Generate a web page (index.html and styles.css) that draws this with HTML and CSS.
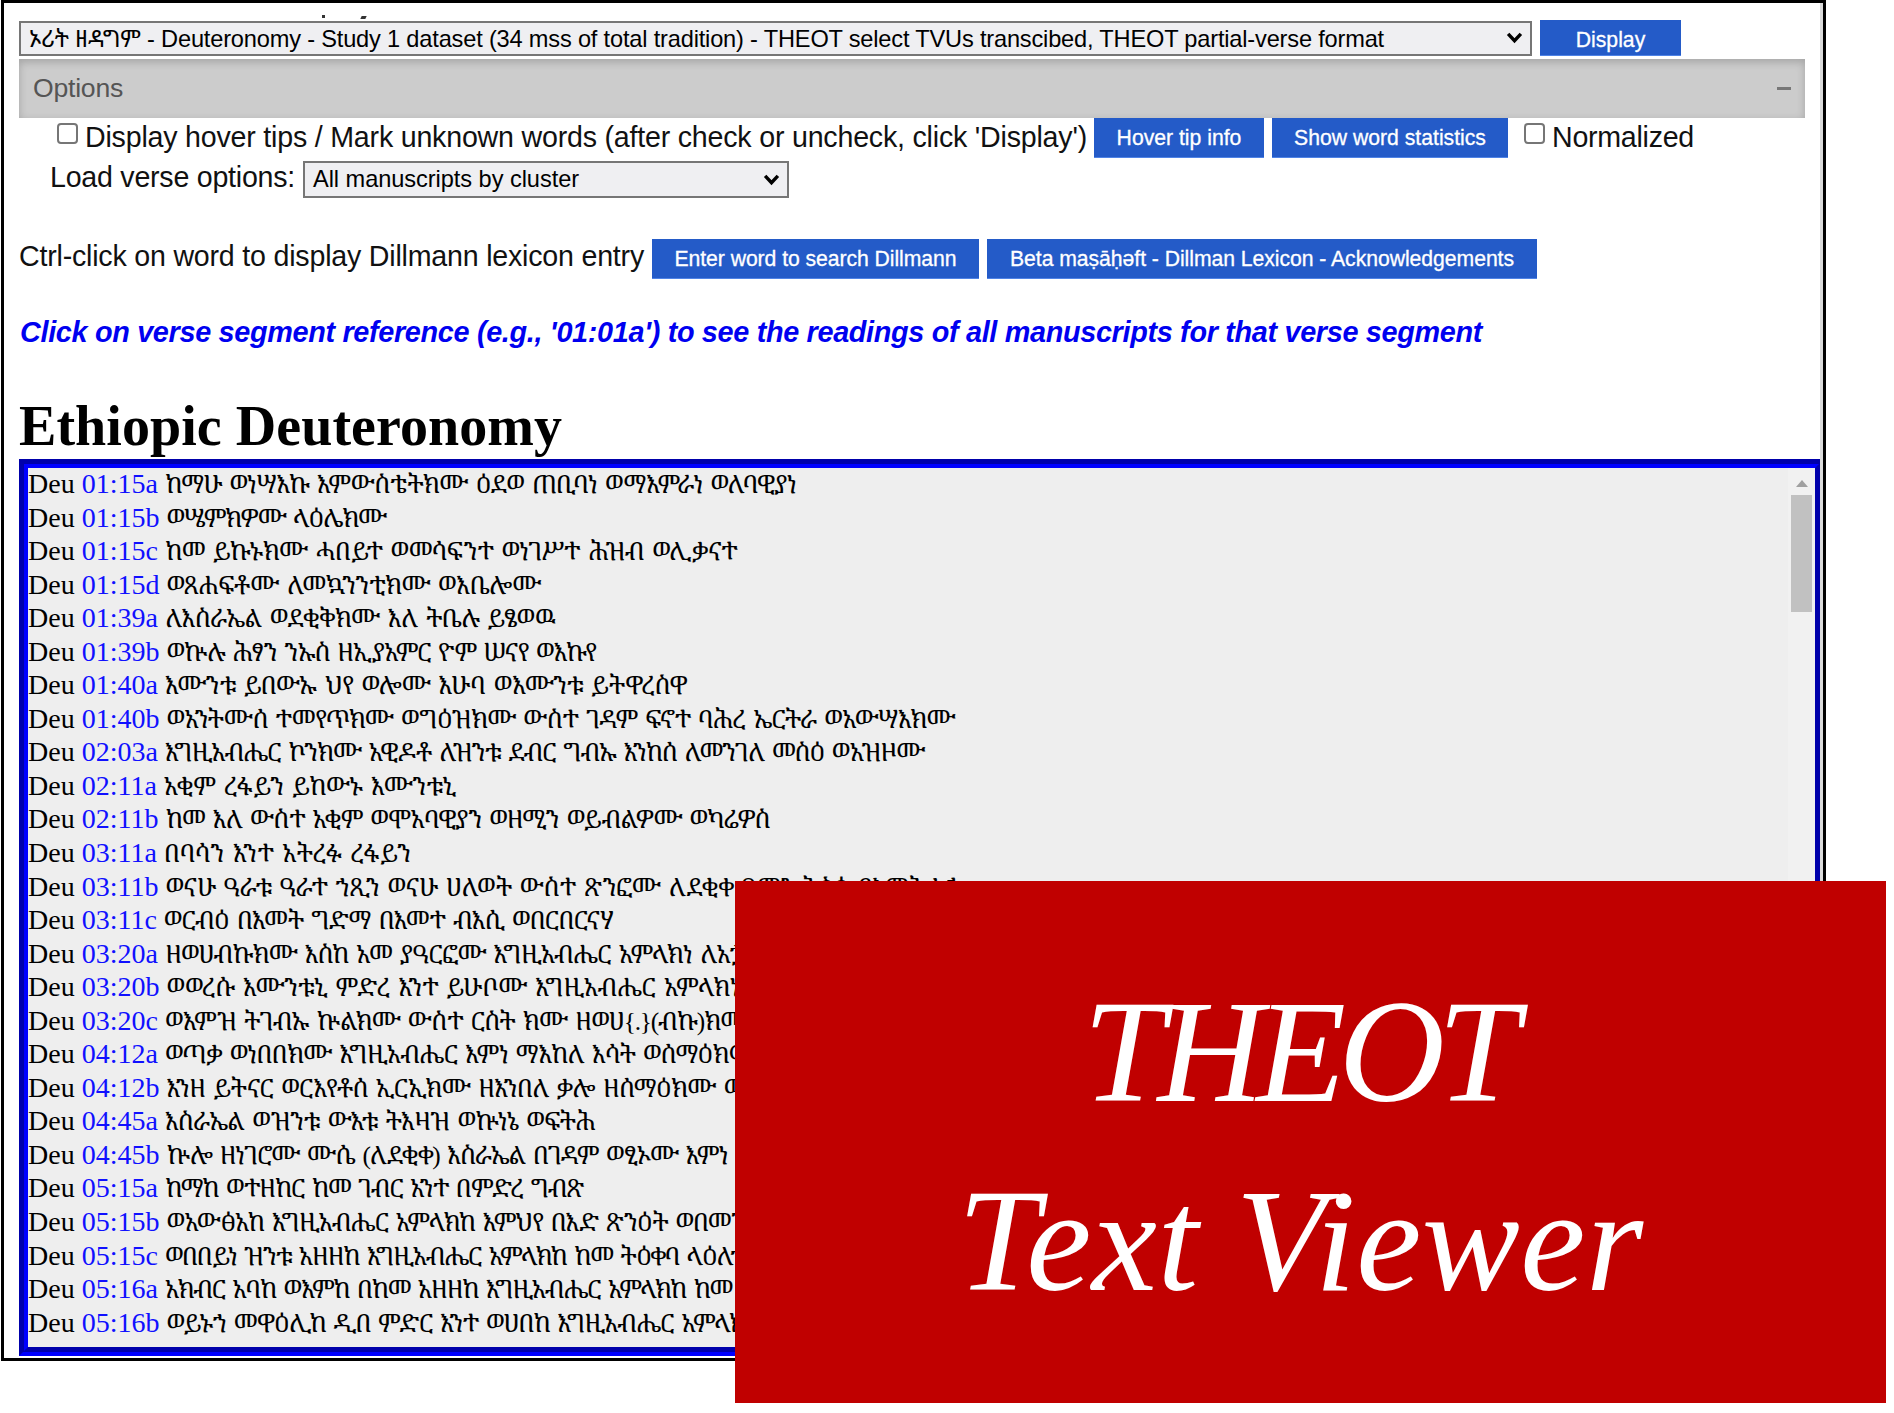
FILE: index.html
```html
<!DOCTYPE html>
<html lang="en">
<head>
<meta charset="utf-8">
<title>THEOT Text Viewer</title>
<link rel="stylesheet" href="styles.css">
</head>
<body>
<div class="frame">
<main class="page">
  <div class="toolbar">
    <i class="tip tip-dot"></i><i class="tip tip-stem"></i>
    <div class="select select-text"><span data-width="1355">ኦሪት ዘዳግም - Deuteronomy - Study 1 dataset (34 mss of total tradition) - THEOT select TVUs transcibed, THEOT partial-verse format</span><svg class="chevron" viewBox="0 0 16 12"><path d="M2 2.5l6 6.5 6-6.5"/></svg></div>
    <button class="btn btn-display">Display</button>
  </div>
  <div class="options"><span data-width="90">Options</span><i class="minus"></i></div>
  <div class="row row-tips">
    <input type="checkbox" class="check"><span class="label" data-width="1002">Display hover tips / Mark unknown words (after check or uncheck, click 'Display')</span>
    <button class="btn btn-hover">Hover tip info</button>
    <button class="btn btn-stats">Show word statistics</button>
    <input type="checkbox" class="check check-norm"><span class="label" data-width="142">Normalized</span>
  </div>
  <div class="row row-load">
    <span class="label" data-width="245">Load verse options:</span>
    <div class="select select-load"><span data-width="266">All manuscripts by cluster</span><svg class="chevron" viewBox="0 0 16 12"><path d="M2 2.5l6 6.5 6-6.5"/></svg></div>
  </div>
  <div class="row row-lex">
    <span class="label" data-width="625">Ctrl-click on word to display Dillmann lexicon entry</span>
    <button class="btn btn-search"><span data-width="282">Enter word to search Dillmann</span></button>
    <button class="btn btn-beta"><span data-width="504">Beta maṣāḥəft - Dillman Lexicon - Acknowledgements</span></button>
  </div>
  <p class="hint"><span data-width="1462">Click on verse segment reference (e.g., '01:01a') to see the readings of all manuscripts for that verse segment</span></p>
  <h1><span data-width="543">Ethiopic Deuteronomy</span></h1>
  <div class="viewer">
    <div class="verses">
      <p>Deu <a>01:15a</a> <b><span data-width="631">ከማሁ ወነሣእኩ እምውስቴትክሙ ዕደወ ጠቢባነ ወማእምራነ ወለባዊያነ</span></b></p>
      <p>Deu <a>01:15b</a> <b><span data-width="219">ወሤምክዎሙ ላዕሌክሙ</span></b></p>
      <p>Deu <a>01:15c</a> <b><span data-width="572">ከመ ይኩኑክሙ ሓበይተ ወመሳፍንተ ወነገሥተ ሕዝብ ወሊቃናተ</span></b></p>
      <p>Deu <a>01:15d</a> <b><span data-width="374">ወጸሐፍቶሙ ለመኳንንቲክሙ ወእቤሎሙ</span></b></p>
      <p>Deu <a>01:39a</a> <b><span data-width="390">ለእስራኤል ወደቂቅክሙ እለ ትቤሉ ይፄወዉ</span></b></p>
      <p>Deu <a>01:39b</a> <b><span data-width="429">ወኵሉ ሕፃን ንኡስ ዘኢያአምር ዮም ሠናየ ወእኩየ</span></b></p>
      <p>Deu <a>01:40a</a> <b><span data-width="522">እሙንቱ ይበውኡ ህየ ወሎሙ እሁባ ወእሙንቱ ይትዋረስዋ</span></b></p>
      <p>Deu <a>01:40b</a> <b><span data-width="788">ወአንትሙሰ ተመየጥክሙ ወግዕዝክሙ ውስተ ገዳም ፍኖተ ባሕረ ኤርትራ ወአውሣእክሙ</span></b></p>
      <p>Deu <a>02:03a</a> <b><span data-width="759">እግዚአብሔር ኮንክሙ አዊዶቶ ለዝንቱ ደብር ግብኡ እንከሰ ለመንገለ መስዕ ወአዝዞሙ</span></b></p>
      <p>Deu <a>02:11a</a> <b><span data-width="292">አቂም ረፋይን ይከውኑ እሙንቱኒ</span></b></p>
      <p>Deu <a>02:11b</a> <b><span data-width="604">ከመ እለ ውስተ አቂም ወሞአባዊያን ወዘሚን ወይብልዎሙ ወካሬዎስ</span></b></p>
      <p>Deu <a>03:11a</a> <b><span data-width="247">በባሳን እንተ አትረፉ ረፋይን</span></b></p>
      <p>Deu <a>03:11b</a> <b><span data-width="568">ወናሁ ዓራቱ ዓራተ ኀጺን ወናሁ ሀለወት ውስተ ጽንፎሙ ለደቂቀ</span> ዓሞን ትስዕ በእመት ኑኁ</b></p>
      <p>Deu <a>03:11c</a> <b><span data-width="449">ወርብዕ በእመት ግድማ በእመተ ብእሲ ወበርበርናሃ</span></b></p>
      <p>Deu <a>03:20a</a> <b><span data-width="527">ዘወሀብኩክሙ እስከ አመ ያዓርፎሙ እግዚአብሔር አምላክነ</span> ለአኃዊክሙ</b></p>
      <p>Deu <a>03:20b</a> <b><span data-width="489">ወወረሱ እሙንቱኒ ምድረ እንተ ይሁቦሙ እግዚአብሔር</span> አምላክነ</b></p>
      <p>Deu <a>03:20c</a> <b><span data-width="539">ወእምዝ ትገብኡ ኵልክሙ ውስተ ርስት ክሙ ዘወሀ{.}(ብኩ)</span>ክሙ</b></p>
      <p>Deu <a>04:12a</a> <b><span data-width="470">ወጣቃ ወነበበክሙ እግዚአብሔር እምነ ማእከለ እሳት</span> ወሰማዕክሙ</b></p>
      <p>Deu <a>04:12b</a> <b><span data-width="549">እንዘ ይትናር ወርእየቶሰ ኢርኢክሙ ዘእንበለ ቃሎ ዘሰማዕክሙ</span> ወአይድዐክሙ</b></p>
      <p>Deu <a>04:45a</a> <b><span data-width="430">እስራኤል ወዝንቱ ውእቱ ትእዛዝ ወኵነኔ ወፍትሕ</span></b></p>
      <p>Deu <a>04:45b</a> <b><span data-width="561">ኵሎ ዘነገሮሙ ሙሴ (ለደቂቀ) እስራኤል በገዳም ወፂኦሙ እምነ</span></b></p>
      <p>Deu <a>05:15a</a> <b><span data-width="418">ከማከ ወተዘከር ከመ ገብር አንተ በምድረ ግብጽ</span></b></p>
      <p>Deu <a>05:15b</a> <b><span data-width="501">ወአውፅአከ እግዚአብሔር አምላክከ እምህየ በእድ ጽንዕት</span> ወበመዝራዕት</b></p>
      <p>Deu <a>05:15c</a> <b><span data-width="514">ወበበይነ ዝንቱ አዘዘከ እግዚአብሔር አምላክከ ከመ ትዕቀባ</span> ላዕለተ</b></p>
      <p>Deu <a>05:16a</a> <b><span data-width="567">አክብር አባከ ወእምከ በከመ አዘዘከ እግዚአብሔር አምላክከ ከመ</span></b></p>
      <p>Deu <a>05:16b</a> <b><span data-width="507">ወይኑኀ መዋዕሊከ ዲበ ምድር እንተ ወሀበከ እግዚአብሔር</span> አምላክከ</b></p>
    </div>
    <div class="scrollbar"><i class="arrow"></i><i class="thumb"></i></div>
  </div>
</main>
</div>
<div class="banner"><div class="banner-top" data-width="429">THEOT</div><div data-width="686">Text Viewer</div></div>
<script src="fit.js"></script>
</body>
</html>
```
FILE: styles.css
```css
* { box-sizing: border-box; }
body { margin: 0; background: #fff; overflow: hidden; font-family: "Liberation Sans", "Noto Sans Ethiopic", "Abyssinica SIL", sans-serif; color: #111; position: relative; height: 1413px; }
.frame { margin-left: 1px; width: 1825px; height: 1361px; border: 3px solid #000; padding-left: 15px; display: flex; }
.page { width: 1804px; height: 1355px; overflow: hidden; border-right: 3px solid #dadada; flex: none; }
.toolbar { margin-top: 17px; height: 36px; display: flex; gap: 8px; position: relative; width: 1700px; }
.tip { position: absolute; background: #333; height: 3px; }
.tip-dot { left: 303px; top: -5px; width: 3px; }
.tip-stem { left: 342px; top: -4px; width: 5px; transform: skewX(-25deg); }
.select { display: flex; align-items: center; justify-content: space-between; background: #efeff2; border: 2px solid #767676; color: #000; font-size: 23.6px; white-space: nowrap; }
.select-text { width: 1513px; height: 35px; margin-top: 1px; padding: 0 7px 2px 8px; }
.select-load { width: 486px; height: 37px; padding: 0 7px 0 8px; margin-left: 8px; }
.chevron { width: 17px; height: 13px; fill: none; stroke: #000; stroke-width: 3.2; }
.btn { background: #245bc8; color: #fff; border: 0; padding: 0; font: 21.2px "Liberation Sans", sans-serif; white-space: nowrap; text-align: center; border-bottom: 1px solid #4f83e6; -webkit-text-stroke: .3px #fff; height: 40px; }
.btn-display { width: 141px; height: 36px; padding-top: 5px; }
.options { margin-top: 3px; width: 1786px; height: 59px; background: #ccc; box-shadow: inset 0 3px 8px rgba(0,0,0,.2); display: flex; align-items: center; justify-content: space-between; padding: 0 14px; color: #555; font-size: 26.6px; }
.minus { width: 14px; height: 3px; background: #777; }
.row { display: flex; white-space: nowrap; }
.label { font-size: 28.6px; line-height: 38px; flex: none; }
.row-tips { height: 40px; padding-left: 38px; }
.check { appearance: none; width: 21px; height: 21px; margin: 5px 7px 0 0; border: 2px solid #767676; border-radius: 4px; background: #fff; flex: none; }
.btn-hover { width: 170px; margin-left: 7px; }
.btn-stats { width: 236px; margin-left: 8px; }
.check-norm { margin-left: 16px; }
.row-load { margin-top: 3px; height: 37px; padding-left: 31px; }
.row-load .label { line-height: 33px; }
.row-lex { margin-top: 41px; height: 40px; }
.row-lex .label { line-height: 34px; }
.btn-search { width: 327px; margin-left: 8px; }
.btn-beta { width: 550px; margin-left: 8px; }
.hint { margin: 36px 0 0; height: 36px; line-height: 34px; font-size: 28.8px; font-weight: bold; font-style: italic; color: #0000f0; white-space: nowrap; padding-left: 1px; }
h1 { margin: 42px 0 0; height: 66px; font: bold 56px/66px "Liberation Serif", serif; color: #000; white-space: nowrap; }
.viewer { width: 1805px; height: 897px; border: 9px groove #00f; background: #eee; display: flex; justify-content: space-between; overflow: hidden; }
.verses { margin-top: -1px; font: 28px/33.56px "Liberation Serif", "Noto Serif Ethiopic", "Abyssinica SIL", "Noto Sans Ethiopic", serif; color: #000; white-space: nowrap; }
.verses p { margin: 0; height: 33.56px; }
.verses a { color: #1010ff; }
.verses b { font-weight: normal; font-size: 25.4px; word-spacing: 3px; }
.scrollbar { width: 27px; background: #f1f1f1; padding: 12px 0 0 3px; flex: none; }
.arrow { display: block; margin-left: 5px; width: 0; height: 0; border: 6px solid transparent; border-top: 0; border-bottom: 7px solid #a0a0a0; }
.thumb { display: block; margin-top: 8px; width: 21px; height: 117px; background: #c1c1c1; }
.banner { position: absolute; left: 735px; top: 881px; width: 1151px; height: 522px; background: #c00000; color: #fff; font: italic 147px/189px "Liberation Serif", serif; display: flex; flex-direction: column; align-items: center; padding: 76px 20px 0 0; white-space: nowrap; }
.banner-top { margin-right: 6px; }
```
FILE: fit.js
```js
document.querySelectorAll('[data-width]').forEach(function (el) {
  var want = +el.dataset.width;
  var have = el.getBoundingClientRect().width;
  var holder = el.parentNode.tagName === 'B' ? el.parentNode : el;
  holder.style.letterSpacing = (want - have) / Array.from(el.textContent).length + 'px';
});
```
